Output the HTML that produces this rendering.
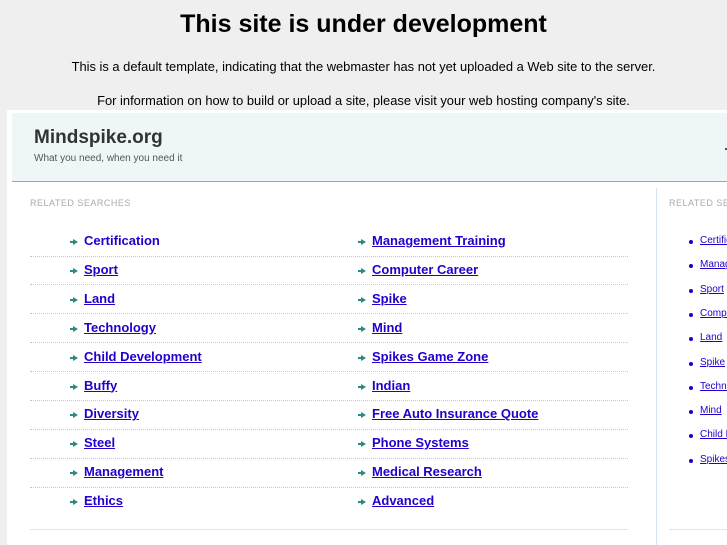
<!DOCTYPE html>
<html style="overflow:hidden"><head><meta charset="utf-8"><style>
body{margin:0;width:727px;height:545px;background:#efefef;font-family:"Liberation Sans",sans-serif;position:relative;overflow:hidden}
.a{position:absolute;white-space:nowrap}
h1{position:absolute;top:10px;left:0;width:727px;text-align:center;margin:0;font-size:25px;font-weight:bold;color:#000}
.p{left:0;width:727px;text-align:center;font-size:12.9px;color:#000}
#box{position:absolute;left:7px;top:110px;width:720px;height:435px;background:#fff}
#hdr{position:absolute;left:12px;top:113px;width:715px;height:68px;background:#eef6f8;border-bottom:1px solid #8aa6e0}
.lnk{font-size:13px;font-weight:bold;color:#2200cc;text-decoration:underline}
.arr{width:0;height:0;border-top:3.5px solid transparent;border-bottom:3.5px solid transparent;border-left:5px solid #2a8a8a}
.arr:before{content:"";position:absolute;left:-8px;top:-1px;width:4px;height:2px;background:#2a8a8a}
.dot{left:30px;width:598px;border-top:1px dotted #b8c8e8;height:0}
.sl{font-size:10px;color:#2200cc;text-decoration:underline}
.bul{width:4px;height:4px;border-radius:2px;background:#2200cc}
.lab{font-size:9px;color:#aaa;letter-spacing:.5px}
</style></head><body>
<h1>This site is under development</h1>
<div class="a p" style="top:59px">This is a default template, indicating that the webmaster has not yet uploaded a Web site to the server.</div>
<div class="a p" style="top:93px">For information on how to build or upload a site, please visit your web hosting company's site.</div>
<div id="box"></div>
<div id="hdr"></div>
<div class="a" style="left:34px;top:127px;font-size:19px;font-weight:bold;color:#333">Mindspike.org</div>
<div class="a" style="left:34px;top:153px;font-size:10px;color:#555">What you need, when you need it</div>
<div class="a" style="left:725px;top:148px;width:2px;height:2px;background:#555"></div>
<div class="a lab" style="left:30px;top:198px">RELATED SEARCHES</div>
<div class="a lab" style="left:669px;top:198px;width:58px;overflow:hidden">RELATED SEARCHES</div>
<div class="a" style="left:656px;top:188px;width:1px;height:357px;background:#d6e2f4"></div>
<div id="rows"></div>
<div class="a" style="left:30px;top:529px;width:598px;height:1px;background:#dde6f6"></div>
<div class="a" style="left:669px;top:529px;width:58px;height:1px;background:#dde6f6"></div>
<script>
var L=["Certification","Sport","Land","Technology","Child Development","Buffy","Diversity","Steel","Management","Ethics"];
var R=["Management Training","Computer Career","Spike","Mind","Spikes Game Zone","Indian","Free Auto Insurance Quote","Phone Systems","Medical Research","Advanced"];
var S=["Certification","Management Training","Sport","Computer Career","Land","Spike","Technology","Mind","Child Development","Spikes Game Zone"];
var h="";
for(var i=0;i<10;i++){var y=233+i*28.9;
h+='<div class="a arr" style="left:73px;top:'+(y+6)+'px"></div><div class="a lnk" style="left:84px;top:'+y+'px;'+(i==0?'text-decoration:none':'')+'">'+L[i]+'</div>';
h+='<div class="a arr" style="left:361px;top:'+(y+6)+'px"></div><div class="a lnk" style="left:372px;top:'+y+'px">'+R[i]+'</div>';
if(i<9)h+='<div class="a dot" style="top:'+(y+22.5)+'px"></div>';
var z=235+i*24.3;
h+='<div class="a bul" style="left:689px;top:'+(z+5)+'px"></div><div class="a sl" style="left:700px;top:'+z+'px;width:27px;overflow:hidden">'+S[i]+'</div>';}
document.getElementById("rows").outerHTML=h;
</script>
</body></html>
